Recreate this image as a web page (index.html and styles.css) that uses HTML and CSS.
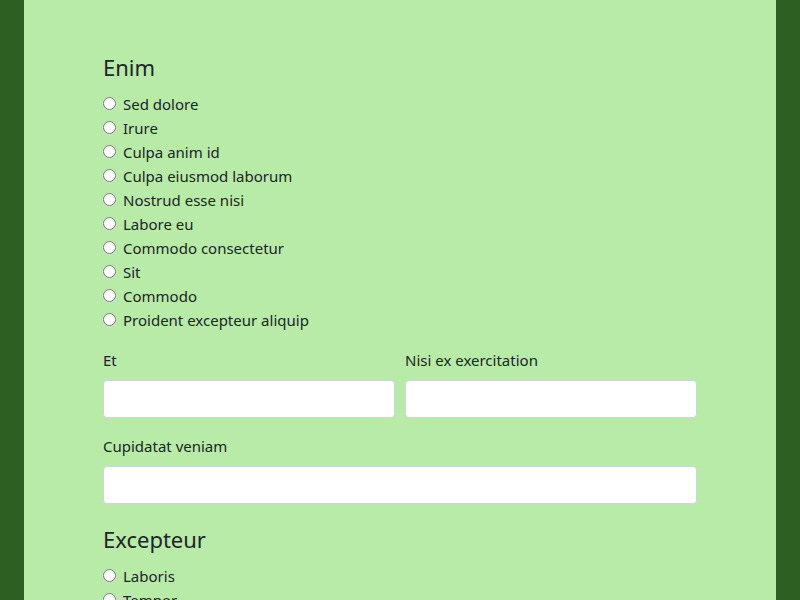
FILE: index.html
```html
<!DOCTYPE html>
<html>
<head>
<meta charset="utf-8">
<link rel="stylesheet" href="styles.css">
</head>
<body>
<div class="page">
  <form class="form">
    <section class="group">
      <h2 class="title">Enim</h2>
      <label class="radio"><input type="radio" name="a"><span>Sed dolore</span></label>
      <label class="radio"><input type="radio" name="a"><span>Irure</span></label>
      <label class="radio"><input type="radio" name="a"><span>Culpa anim id</span></label>
      <label class="radio"><input type="radio" name="a"><span>Culpa eiusmod laborum</span></label>
      <label class="radio"><input type="radio" name="a"><span>Nostrud esse nisi</span></label>
      <label class="radio"><input type="radio" name="a"><span>Labore eu</span></label>
      <label class="radio"><input type="radio" name="a"><span>Commodo consectetur</span></label>
      <label class="radio"><input type="radio" name="a"><span>Sit</span></label>
      <label class="radio"><input type="radio" name="a"><span>Commodo</span></label>
      <label class="radio"><input type="radio" name="a"><span>Proident excepteur aliquip</span></label>
    </section>
    <div class="row">
      <div class="field">
        <label class="label">Et</label>
        <input class="input" type="text">
      </div>
      <div class="field">
        <label class="label">Nisi ex exercitation</label>
        <input class="input" type="text">
      </div>
    </div>
    <div class="field">
      <label class="label">Cupidatat veniam</label>
      <input class="input" type="text">
    </div>
    <section class="group group2">
      <h2 class="title">Excepteur</h2>
      <label class="radio"><input type="radio" name="b"><span>Laboris</span></label>
      <label class="radio"><input type="radio" name="b"><span>Tempor</span></label>
      <label class="radio"><input type="radio" name="b"><span>Dolor</span></label>
    </section>
  </form>
</div>
</body>
</html>
```

FILE: styles.css
```css
html, body {
  margin: 0;
  padding: 0;
  height: 100%;
  overflow: hidden;
}
body {
  background: #2d5e22;
  font-family: "Noto Sans", "Open Sans", sans-serif;
  color: #212529;
  font-size: 15px;
}
.page {
  margin: 0 24px;
  background: #b7eba7;
  min-height: 100%;
  padding: 53px 79px 0;
}
.form {
  display: flex;
  flex-direction: column;
}
.title {
  font-weight: 400;
  font-size: 22px;
  line-height: 29px;
  margin: 0 0 10px;
}
.radio {
  display: flex;
  align-items: center;
  height: 24px;
}
.radio input {
  width: 13px;
  height: 13px;
  margin: 0 7px 2px 0;
}
.row {
  display: flex;
  gap: 10px;
  margin-top: 16px;
}
.row .field { flex: 1; margin-top: 0; }
.field {
  display: flex;
  flex-direction: column;
  margin-top: 16px;
}
.label {
  line-height: 24px;
  margin-bottom: 8px;
}
.input {
  box-sizing: border-box;
  height: 38px;
  border: 1px solid #ced4da;
  border-radius: 4px;
  background: #fff;
  margin: 0;
}
.group2 {
  margin-top: 21px;
}
```
